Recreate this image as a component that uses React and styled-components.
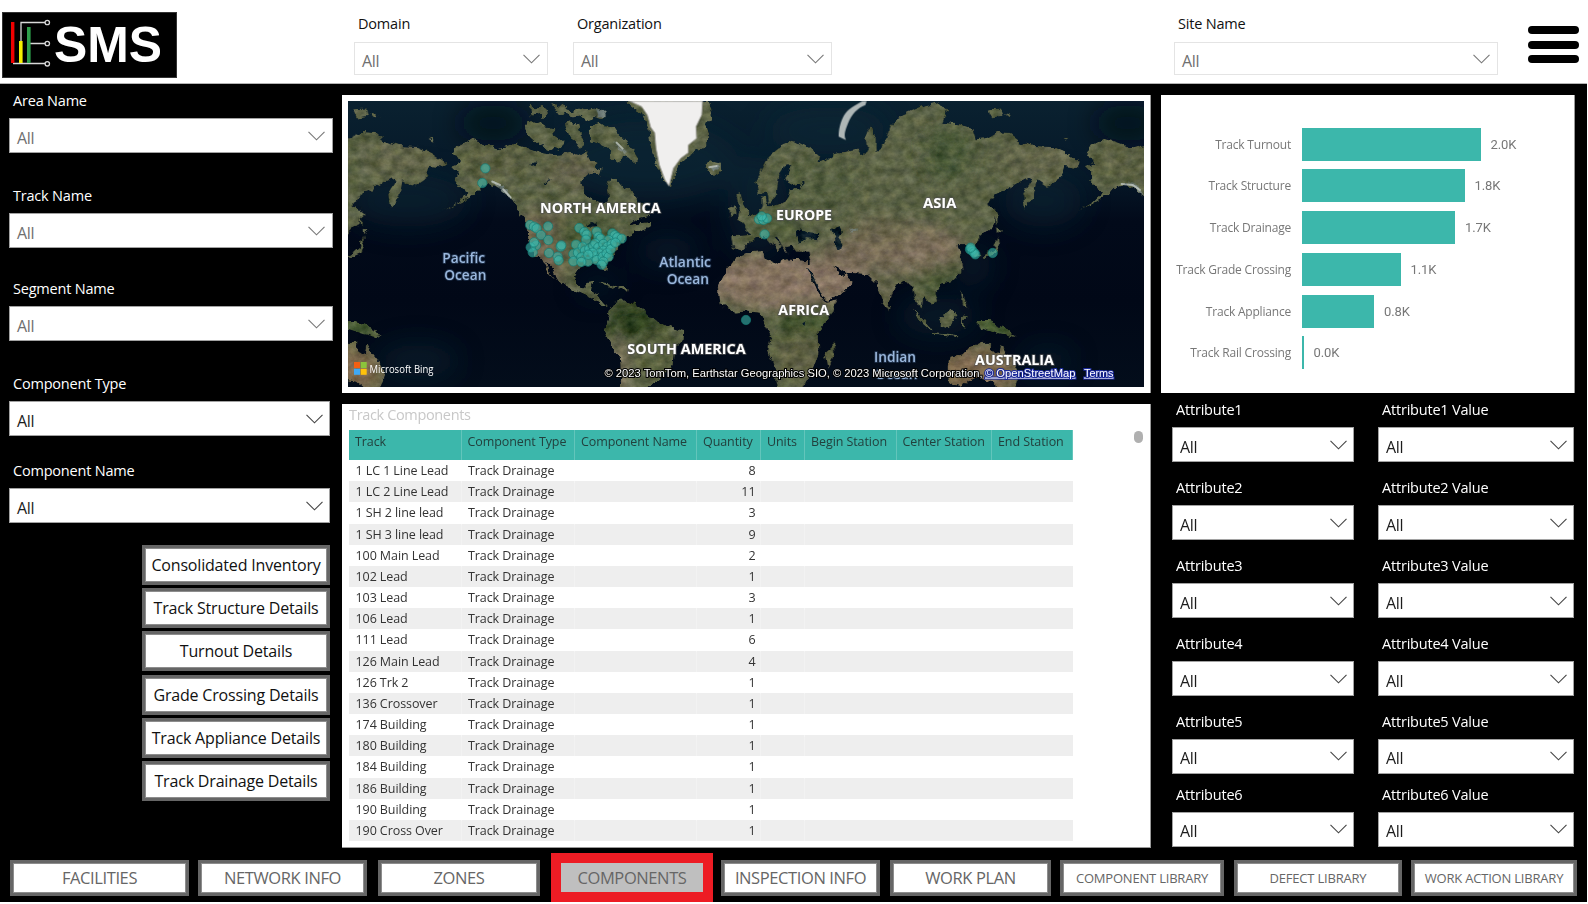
import React from "react";
import styled, { createGlobalStyle } from "styled-components";

const Global = createGlobalStyle`
  *, *::before, *::after { box-sizing: border-box; }
  body { margin: 0; background: #fff; font-family: "Open Sans", "Noto Sans", sans-serif; }
  button { font-family: inherit; }
`;

const TEAL = "#3cb7ab";

const Page = styled.div`
  width: 1588px;
  height: 904px;
  overflow: hidden;
  background: #fff;
`;

const Header = styled.header`
  height: 84px;
  width: 1587px;
  display: flex;
  align-items: flex-start;
  border-bottom: 1px solid #b4b4b4;
`;

const Logo = styled.svg`
  display: block;
  margin: 12px 177px 0 2px;
  flex: none;
`;

const MenuButton = styled.button`
  width: 51px;
  height: 37px;
  margin: 26px 0 0 30px;
  padding: 0;
  border: 0;
  background: none;
  display: flex;
  flex-direction: column;
  justify-content: space-between;
`;

const MenuBar = styled.span`
  height: 8px;
  border-radius: 4px;
  background: #000;
`;

const FieldBox = styled.div`
  width: ${(p) => p.$w}px;
  margin-top: ${(p) => p.$top || 0}px;
  margin-right: ${(p) => p.$right || 0}px;
  flex: none;
`;

const FieldLabel = styled.div`
  height: 20px;
  line-height: 20px;
  padding-left: 4px;
  margin-bottom: ${(p) => (p.$light ? 8 : 7)}px;
  font-size: 14.5px;
  letter-spacing: -0.2px;
  white-space: nowrap;
  color: ${(p) => (p.$light ? "#111" : "#fff")};
`;

const SelectBox = styled.div`
  height: ${(p) => (p.$light ? 33 : 35)}px;
  border: 1px solid ${(p) => (p.$light ? "#e4e4e4" : "#a2a2a2")};
  background: #fff;
  display: flex;
  align-items: center;
  justify-content: space-between;
  padding: 4px ${(p) => (p.$muted ? 7 : 6)}px 0 7px;
  font-size: 16px;
  letter-spacing: -0.3px;
  color: ${(p) => (p.$muted ? "#707070" : "#1c1c1c")};
  svg { margin-top: ${(p) => (p.$light ? -3 : -4)}px; }
`;

const Body = styled.div`
  display: flex;
  width: 1587px;
  height: 769px;
  background: #000;
`;

const LeftColumn = styled.aside`
  width: 342px;
  padding: 7px 0 0 9px;
  flex: none;
`;

const DetailList = styled.div`
  margin: 22px 0 0 133px;
  width: 188px;
  display: flex;
  flex-direction: column;
  gap: 3.2px;
`;

const FrameButton = styled.button`
  height: ${(p) => p.$h}px;
  width: ${(p) => (p.$w ? p.$w + "px" : "auto")};
  margin-left: ${(p) => p.$left || 0}px;
  flex: none;
  padding: ${(p) => p.$drop || 0}px 0 0;
  border: 3px solid #666;
  outline: 1px solid #8d8d8d;
  outline-offset: -4px;
  background: #fff;
  color: ${(p) => p.$color};
  font-size: ${(p) => p.$size}px;
  letter-spacing: ${(p) => p.$ls}px;
  white-space: nowrap;
  line-height: 1;
`;

const ActiveTab = styled(FrameButton)`
  border: 10px solid #ed1c24;
  outline: none;
  background: #bfbfbf;
`;

const Center = styled.main`
  width: 809px;
  padding-top: 11px;
  flex: none;
`;

const MapPanel = styled.section`
  height: 298px;
  padding: 6px;
  background: #fff;
  border-right: 1px solid #999;
  svg { display: block; }
`;

const TablePanel = styled.section`
  height: 444px;
  margin-top: 11px;
  padding-left: 7px;
  background: #fff;
  border-right: 1px solid #999;
  border-bottom: 1px solid #999;
  display: flex;
  justify-content: space-between;
`;

const TableTitle = styled.h2`
  margin: 0;
  height: 26px;
  line-height: 22px;
  font-weight: 400;
  font-size: 14.5px;
  letter-spacing: -0.35px;
  color: #c8c8c8;
`;

const TableGrid = styled.div`
  width: 724px;
  font-size: 12.5px;
`;

const Row = styled.div`
  display: grid;
  grid-template-columns: 112.5px 113.5px 122px 64px 44px 91.5px 95.5px 81px;
  height: ${(p) => (p.$head ? 30 : 21.18)}px;
  background: ${(p) => (p.$head ? TEAL : p.$odd ? "#eee" : "#fff")};
`;

const Cell = styled.div`
  padding: ${(p) => (p.$head ? "3px 0 0 6px" : "0 0 0 6.5px")};
  padding-right: ${(p) => (p.$num ? 4.5 : 0)}px;
  text-align: ${(p) => (p.$num ? "right" : "left")};
  line-height: ${(p) => (p.$head ? 18 : 22.6)}px;
  letter-spacing: -0.08px;
  white-space: nowrap;
  color: ${(p) => (p.$head ? "#22403d" : "#333")};
  border-right: 1px solid ${(p) => (p.$head ? "rgba(255,255,255,.2)" : "rgba(255,255,255,.25)")};
`;

const ScrollThumb = styled.div`
  width: 9px;
  height: 12px;
  margin: 27px 7px 0 0;
  border-radius: 5px;
  background: #b0b0b0;
`;

const RightColumn = styled.aside`
  width: 425px;
  padding: 11px 0 0 10px;
`;

const ChartPanel = styled.section`
  width: 414px;
  height: 298px;
  padding-top: 32.5px;
  background: #fff;
  border-right: 1px solid #999;
`;

const BarRow = styled.div`
  height: 41.8px;
  display: flex;
  align-items: flex-start;
  line-height: 33px;
`;

const BarLabel = styled.div`
  width: 130px;
  margin-right: 11px;
  text-align: right;
  font-size: 12px;
  letter-spacing: -0.2px;
  white-space: nowrap;
  color: #777;
`;

const Bar = styled.div`
  height: 33px;
  background: ${TEAL};
`;

const BarValue = styled.div`
  margin-left: 10px;
  font-family: Roboto, sans-serif;
  font-size: 13px;
  letter-spacing: -0.1px;
  color: #777;
`;

const Attributes = styled.div`
  display: flex;
  gap: 24px;
  margin: 7px 0 0 11px;
`;

const TabBar = styled.nav`
  width: 1587px;
  height: 49px;
  background: #000;
  display: flex;
  align-items: center;
`;

const Chevron = ({ color }) => (
  <svg width="17" height="10" viewBox="0 0 17 10" fill="none">
    <path d="M.5 .8 8.5 8.8 16.5 .8" stroke={color} strokeWidth="1.1" />
  </svg>
);

function Field({ label, w, top, right, light, muted }) {
  return (
    <FieldBox $w={w} $top={top} $right={right}>
      <FieldLabel $light={light}>{label}</FieldLabel>
      <SelectBox $light={light} $muted={muted}>
        <span>All</span>
        <Chevron color={muted ? "#777" : "#444"} />
      </SelectBox>
    </FieldBox>
  );
}

function BrandLogo() {
  return (
    <Logo width="175" height="66" viewBox="2 12 175 66">
      <rect x="2" y="12" width="175" height="66" fill="#000" />
      <rect x="2.5" y="12.5" width="174" height="65" fill="none" stroke="#333" />
      <g fill="none" stroke="#d8d8d8" strokeWidth="1.3">
        <path d="M21 42V22.5H45M30 43.5H45M13 63.5H45" />
        <circle cx="47.3" cy="22.5" r="2.2" />
        <circle cx="47.3" cy="43.5" r="2.2" />
        <circle cx="47.3" cy="63.8" r="2.2" />
      </g>
      <rect x="11" y="22" width="3.4" height="41" fill="#f00000" />
      <rect x="19" y="41" width="3.6" height="22" fill="#f5f000" />
      <rect x="27" y="27" width="3.6" height="36" fill="#2e9f4b" />
      <text x="54" y="61.5" fontFamily="'Liberation Sans', sans-serif" fontWeight="700" fontSize="50.5" fill="#fff" textLength="108" lengthAdjust="spacingAndGlyphs">SMS</text>
    </Logo>
  );
}

/* Map outlines: the Americas use sheet units directly, Eurasia and Africa sit 1215 units to the east. */
const WEST = [
  "M335 185 345 165 385 143 425 155 470 172 520 158 560 170 600 185 640 192 690 185 715 192 735 180 745 205 770 215 760 240 735 255 718 275 725 300 745 320 775 332 785 345 800 330 798 290 808 262 830 265 850 290 875 300 890 330 915 350 925 375 890 382 865 402 900 396 935 392 925 408 880 425 855 435 850 455 830 470 815 495 800 515 797 540 785 535 775 517 740 520 715 530 703 550 706 580 725 592 740 575 757 572 750 600 770 610 778 630 805 645 775 642 750 622 715 605 685 592 655 570 635 535 612 510 625 545 645 570 620 545 600 505 575 480 562 450 560 410 552 385 530 355 510 320 480 297 450 280 425 285 405 308 350 340 300 362 350 335 385 303 360 290 340 265 350 245 330 225 355 215Z",
  "M553 100 562 85 580 95 600 88 612 105 640 112 642 130 668 148 660 175 640 168 620 180 590 160 570 142 558 128Z",
  "M565 40 585 52 600 44 625 60 608 80 590 66 572 75Z",
  "M630 38 650 45 662 34 680 55 700 60 720 48 740 56 770 50 790 62 785 85 760 78 735 88 720 74 690 80 678 66 655 72Z",
  "M745 105 775 95 800 112 820 110 832 128 850 145 860 165 878 175 888 200 880 218 862 200 846 195 842 218 825 212 812 200 806 178 790 168 770 158 750 150Z",
  "M675 100 695 92 712 100 718 125 732 140 728 160 712 170 700 150 686 140Z",
  "M755 222 782 235 775 258 760 245Z",
  "M855 33 890 60 910 72 922 115 928 165 940 210 958 250 975 275 990 290 1000 250 1020 215 1050 190 1090 170 1105 130 1095 100 1115 70 1105 33Z",
  "M1088 222 1105 210 1135 216 1145 235 1120 252 1098 242Z",
  "M820 632 850 628 880 640 905 655 925 680 950 690 975 705 1030 720 1028 750 1000 775 995 820 965 850 940 870 920 895 835 895 842 850 840 800 815 775 788 720 800 690 805 660Z",
  "M765 573 800 578 832 590 820 594 790 582Z",
  "M835 588 860 588 860 596 835 596Z",
];
const EAST = [
  "M-45 435 5 432 2 410-18 388 15 375 40 362 50 345 48 318 60 318 66 343 82 345 118 332 130 298 168 292 162 278 130 284 118 262 135 222 120 224 100 255 95 285 90 320 70 338 62 305 40 310 30 270 65 200 110 165 150 150 190 170 220 195 215 215 195 218 240 208 265 190 310 180 335 175 350 195 365 170 358 130 375 105 390 130 390 180 412 165 430 110 470 70 530 45 580 33 605 60 590 95 640 100 680 110 690 145 720 140 750 122 790 125 820 150 860 165 920 168 960 185 1005 215 990 230 955 225 945 260 905 288 876 268 862 320 835 355 830 310 855 270 840 262 790 290 750 310 725 345 750 358 745 400 700 440 690 465 702 500 684 494 665 460 635 460 645 500 650 540 620 570 585 578 572 600 580 630 555 642 530 615 525 650 538 672 510 632 500 590 480 570 450 582 435 620 425 655 405 628 390 575 365 552 300 548 262 522 275 548 300 552 320 570 300 600 240 630 230 612 200 560 180 525 195 510 190 482 150 482 135 462 120 465 128 490 112 470 92 440 84 442 108 465 98 482 62 440 30 442 5 462-15 482-40 475Z",
  "M-85 590-60 540-30 500 0 485 50 480 60 505 100 520 120 505 185 510 190 545 215 600 235 632 277 625 260 665 215 720 217 790 195 850 165 895 95 895 85 830 65 780 75 735 50 690 40 665 0 662-35 665-80 640Z",
  "M235 785 268 755 268 790 245 832Z",
  "M605 830 610 800 650 790 665 770 700 755 735 755 735 780 760 790 765 755 777 780 800 810 820 850 805 895 765 895 735 870 690 860 640 884 608 880Z",
  "M690 690 730 690 790 715 812 742 760 730 700 710Z",
  "M500 655 530 680 562 720 545 712 515 685Z",
  "M560 725 635 735 630 741 560 731Z",
  "M580 682 618 652 632 670 612 710 587 702Z",
  "M638 595 652 615 668 655 652 642Z",
  "M645 675 668 680 650 692 660 712 645 705Z",
  "M755 435 760 460 752 485 715 502 705 498 742 475Z",
  "M752 408 772 418 755 430Z",
  "M748 345 756 370 755 405 748 395Z",
  "M-30 310-15 305-10 330 10 365 10 382-25 390-20 350Z",
  "M-50 350-35 345-30 370-48 380Z",
  "M725 55 765 52 770 75 735 80Z",
  "M775 65 802 72 792 80Z",
  "M425 645 434 655 428 665Z",
  "M950 140 970 140 965 150Z",
];
const WATER = [
  "M150 430 165 415 185 425 220 430 218 445 185 442 155 452Z",
  "M255 415 280 405 290 425 275 435 290 460 285 480 265 475 268 445Z",
  "M165 274 176 272 170 286Z",
  "M170 695 182 688 178 702Z",
  "M183 530 190 530 225 600 228 614Z",
];
const LAKES = ["M735 400 755 393 768 404 750 408Z", "M565 220 588 210 578 228Z", "M605 275 630 262 615 278Z"];

/* [cx, cy, rx, ry, colour] for the tinted areas of the land */
const TINTS = [
  [600, 420, 80, 60, "#6b624c"], [620, 520, 50, 70, "#70634e"], [740, 440, 100, 60, "#4e5a39"], [460, 210, 110, 60, "#5b6143"],
  [700, 240, 90, 45, "#626149"], [880, 690, 90, 50, "#2a3c1e"], [950, 790, 70, 60, "#58603e"], [835, 840, 22, 90, "#877866"],
  [1300, 570, 200, 85, "#857361"], [1470, 560, 110, 70, "#877563"], [1540, 490, 90, 50, "#736755"], [1710, 470, 160, 70, "#7c6e5a"],
  [1620, 420, 100, 40, "#6c664e"], [1390, 690, 90, 50, "#42522e"], [1380, 800, 90, 70, "#5d5f43"], [1820, 190, 70, 80, "#4a5838"],
  [2100, 210, 130, 60, "#626549"], [1430, 280, 120, 70, "#555f40"], [1800, 570, 60, 50, "#4a5736"], [1910, 840, 120, 70, "#7d684e"],
  [1955, 715, 60, 25, "#375226"], [1300, 400, 80, 40, "#505b3b"], [1640, 590, 45, 60, "#62624a"],
];

const US_DOTS = [
  [570, 405], [582, 410], [590, 415], [624, 409], [603, 435], [625, 450], [588, 466], [572, 472], [578, 487], [582, 457],
  [627, 489], [662, 470], [664, 466], [653, 500], [656, 511], [718, 414], [733, 426], [740, 434], [738, 449], [708, 464],
  [770, 425], [775, 440], [782, 446], [817, 430], [824, 436], [832, 442], [845, 446], [806, 450], [700, 492], [700, 514],
  [714, 488], [728, 470], [735, 482], [748, 476], [724, 502], [744, 515], [760, 468], [766, 460], [775, 472], [790, 462],
  [802, 470], [815, 462], [790, 482], [778, 490], [764, 500], [758, 488], [745, 494], [770, 510], [788, 500], [800, 490],
  [806, 500], [790, 515], [785, 524], [812, 478], [826, 458], [724, 516],
];
const OTHER_DOTS = [
  [436, 235], [427, 279], [1218, 690], [1257, 388], [1270, 390], [1281, 385], [1265, 379], [1274, 433],
  [1890, 478], [1896, 482], [1902, 488], [1906, 493], [1892, 473], [1958, 489],
];

const LandPaths = () => (
  <>
    {WEST.map((d) => <path key={d} d={d} />)}
    {EAST.map((d) => <path key={d} d={d} transform="translate(1215 0)" />)}
  </>
);

function WorldSheet() {
  return (
    <g id="world">
      <g fill="#5c6346"><LandPaths /></g>
      <g clipPath="url(#land)">
        <g filter="url(#soft)">
          {TINTS.map(([x, y, rx, ry, c], i) => <ellipse key={i} cx={x} cy={y} rx={rx} ry={ry} fill={c} />)}
        </g>
      </g>
      <g fill="#081a26">
        {WATER.map((d) => <path key={d} d={d} transform="translate(1215 0)" />)}
        {LAKES.map((d) => <path key={d} d={d} />)}
      </g>
    </g>
  );
}

const Place = ({ x, y, w, ocean, children }) => (
  <text x={x / 3 - 8} y={y / 3 - 11} textLength={w / 3} lengthAdjust="spacingAndGlyphs"
    fontSize="14.5" fontWeight={ocean ? 600 : 700} fill={ocean ? "#9bb8dd" : "#fff"}
    stroke={ocean ? "#2a3f5c" : "#555"} strokeWidth="2" strokeOpacity=".65" paintOrder="stroke" strokeLinejoin="round">
    {children}
  </text>
);

const Credit = ({ x, w, link, children }) => (
  <text x={x} y="275.5" textLength={w} lengthAdjust="spacingAndGlyphs" fontFamily="'Liberation Sans', sans-serif" fontSize="11"
    fill="#fff" stroke={link ? "#1c2a9c" : "#000"} strokeWidth="2" paintOrder="stroke" textDecoration={link ? "underline" : "none"}>
    {children}
  </text>
);

function WorldMap() {
  return (
    <svg width="796" height="286" viewBox="0 0 796 286" fontFamily="'Open Sans', sans-serif">
      <defs>
        <clipPath id="land"><LandPaths /></clipPath>
        <filter id="soft" x="-10%" y="-10%" width="120%" height="120%"><feGaussianBlur stdDeviation="22" /></filter>
        <filter id="blurSea" x="-30%" y="-30%" width="160%" height="160%"><feGaussianBlur stdDeviation="14" /></filter>
        <filter id="terrain" x="0" y="0" width="796" height="286" filterUnits="userSpaceOnUse" colorInterpolationFilters="sRGB">
          <feTurbulence type="fractalNoise" baseFrequency="0.13" numOctaves="3" seed="4" result="edge" />
          <feDisplacementMap in="SourceGraphic" in2="edge" scale="7" xChannelSelector="R" yChannelSelector="G" result="shape" />
          <feTurbulence type="fractalNoise" baseFrequency="0.09 0.12" numOctaves="5" seed="9" />
          <feColorMatrix values="1.1 0 0 0 0  1 .1 0 0 0  .85 0 .25 0 0  0 0 0 0 1" result="grain" />
          <feComposite in="shape" in2="grain" operator="arithmetic" k2="1" k3="0.26" k4="-0.145" />
          <feComposite in2="shape" operator="in" />
        </filter>
        <linearGradient id="sea" x1="0" y1="0" x2="0" y2="1">
          <stop offset="0" stopColor="#0a2130" />
          <stop offset=".26" stopColor="#061828" />
          <stop offset=".42" stopColor="#020a1a" />
          <stop offset=".7" stopColor="#010817" />
          <stop offset="1" stopColor="#030d1b" />
        </linearGradient>
      </defs>
      <rect width="796" height="286" fill="url(#sea)" />
      <g filter="url(#blurSea)" fill="#0b2a38" opacity=".5">
        <ellipse cx="60" cy="100" rx="60" ry="26" />
        <ellipse cx="695" cy="100" rx="40" ry="26" />
        <ellipse cx="300" cy="60" rx="90" ry="40" />
        <ellipse cx="410" cy="105" rx="30" ry="50" />
        <ellipse cx="480" cy="30" rx="60" ry="24" />
        <ellipse cx="590" cy="215" rx="40" ry="18" />
        <ellipse cx="70" cy="260" rx="40" ry="16" />
        <ellipse cx="320" cy="150" rx="30" ry="14" />
        <ellipse cx="250" cy="185" rx="20" ry="8" />
        <ellipse cx="625" cy="165" rx="18" ry="20" />
        <ellipse cx="700" cy="260" rx="24" ry="12" />
      </g>
      <g filter="url(#blurSea)" fill="#010a18" opacity=".8">
        <ellipse cx="145" cy="22" rx="34" ry="18" />
        <ellipse cx="780" cy="22" rx="34" ry="18" />
      </g>
      <g filter="url(#terrain)">
        <g transform="translate(-7 -10) scale(.33333)">
          <WorldSheet />
          <use href="#world" x="-1904" />
          <use href="#world" x="1904" />
          <g fill="#75827d">
            <path d="M768 55 790 58 796 78 775 80ZM820 150 850 178 858 195 835 175ZM455 272 490 290 515 325 540 350 510 322 470 292ZM2360 272 2395 290 2410 315 2380 292ZM1110 228 1135 228 1120 240Z" />
            <path d="M1527 412 1545 410 1540 422Z" />
          </g>
        </g>
      </g>
      <g transform="translate(-8 -11) scale(.33333)">
        <path d="M868 33 905 50 922 75 932 112 944 128 948 175 958 225 975 270 987 288 1000 235 1022 205 1045 188 1045 165 1070 145 1068 110 1085 75 1088 33Z" fill="#f0efee" stroke="#9a9a92" strokeWidth="3" strokeLinejoin="round" />
        <path d="M1580 33 1576 45C1552 54 1535 72 1524 100C1516 120 1510 135 1518 150L1496 140C1496 120 1500 98 1512 76C1524 56 1545 46 1566 34Z" fill="#aeb6b6" />
        <path d="M457 275 480 285M490 298 512 322M830 158 848 176M1108 232 1130 228M2345 282 2378 285 2400 300" fill="none" stroke="#c5ccc8" strokeWidth="6" strokeLinecap="round" opacity=".75" />
      </g>
      <Place x={387 + 1215} y={817} w={126} ocean>Indian</Place>
      <Place x={390 + 1215} y={868} w={128} ocean>Ocean</Place>
      <g transform="translate(-8 -11) scale(.33333)" fill={TEAL} fillOpacity=".6" stroke="#137a72" strokeOpacity=".8" strokeWidth="2.5">
        {US_DOTS.concat(OTHER_DOTS).map(([x, y], i) => <circle key={i} cx={x} cy={y} r="14" />)}
      </g>
      <Place x={307} y={518} w={128} ocean>Pacific</Place>
      <Place x={313} y={570} w={126} ocean>Ocean</Place>
      <Place x={958} y={530} w={155} ocean>Atlantic</Place>
      <Place x={980} y={582} w={127} ocean>Ocean</Place>
      <Place x={600} y={369} w={362}>NORTH AMERICA</Place>
      <Place x={862} y={793} w={355}>SOUTH AMERICA</Place>
      <Place x={93 + 1215} y={391} w={168}>EUROPE</Place>
      <Place x={534 + 1215} y={354} w={100}>ASIA</Place>
      <Place x={100 + 1215} y={674} w={152}>AFRICA</Place>
      <Place x={690 + 1215} y={826} w={237}>AUSTRALIA</Place>
      <rect x="6" y="261" width="6" height="6" fill="#f25f13" />
      <rect x="12.7" y="261" width="6" height="6" fill="#8bc43c" />
      <rect x="6" y="267.8" width="6" height="6" fill="#3fa9f5" />
      <rect x="12.7" y="267.8" width="6" height="6" fill="#ffc20a" />
      <text x="21.5" y="271.5" fontSize="10.5" fill="#fff" textLength="64" lengthAdjust="spacingAndGlyphs">Microsoft Bing</text>
      <Credit x={256.5} w={378}>© 2023 TomTom, Earthstar Geographics SIO, © 2023 Microsoft Corporation,</Credit>
      <Credit x={637} w={90.5} link>© OpenStreetMap</Credit>
      <Credit x={736} w={29.5} link>Terms</Credit>
    </svg>
  );
}

const BARS = [
  ["Track Turnout", 178.5, "2.0K"],
  ["Track Structure", 162.5, "1.8K"],
  ["Track Drainage", 153, "1.7K"],
  ["Track Grade Crossing", 98.5, "1.1K"],
  ["Track Appliance", 72, "0.8K"],
  ["Track Rail Crossing", 1.5, "0.0K"],
];

const COLUMNS = ["Track", "Component Type", "Component Name", "Quantity", "Units", "Begin Station", "Center Station", "End Station"];

const TRACKS = [
  ["1 LC 1 Line Lead", 8], ["1 LC 2 Line Lead", 11], ["1 SH 2 line lead", 3], ["1 SH 3 line lead", 9],
  ["100 Main Lead", 2], ["102 Lead", 1], ["103 Lead", 3], ["106 Lead", 1], ["111 Lead", 6], ["126 Main Lead", 4],
  ["126 Trk 2", 1], ["136 Crossover", 1], ["174 Building", 1], ["180 Building", 1], ["184 Building", 1],
  ["186 Building", 1], ["190 Building", 1], ["190 Cross Over", 1],
];

const DETAILS = [
  "Consolidated Inventory", "Track Structure Details", "Turnout Details",
  "Grade Crossing Details", "Track Appliance Details", "Track Drainage Details",
];

const TABS = [
  { name: "FACILITIES", left: 10, w: 179 },
  { name: "NETWORK INFO", left: 9, w: 169 },
  { name: "ZONES", left: 11, w: 162 },
  { name: "COMPONENTS", left: 11, w: 162, active: true },
  { name: "INSPECTION INFO", left: 8, w: 159 },
  { name: "WORK PLAN", left: 10, w: 161 },
  { name: "COMPONENT LIBRARY", left: 9, w: 164, small: true },
  { name: "DEFECT LIBRARY", left: 10, w: 168, small: true },
  { name: "WORK ACTION LIBRARY", left: 9, w: 166, small: true },
];

const ATTR_TOPS = [0, 16, 16, 16, 15.5, 11];

export default function App() {
  return (
    <>
      <Global />
      <Page>
        <Header>
          <BrandLogo />
          <Field label="Domain" w={194} top={14} right={25} light muted />
          <Field label="Organization" w={259} top={14} right={342} light muted />
          <Field label="Site Name" w={324} top={14} light muted />
          <MenuButton aria-label="Menu"><MenuBar /><MenuBar /><MenuBar /></MenuButton>
        </Header>
        <Body>
          <LeftColumn>
            <Field label="Area Name" w={324} muted />
            <Field label="Track Name" w={324} top={33} muted />
            <Field label="Segment Name" w={324} top={31} muted />
            <Field label="Component Type" w={321} top={33} />
            <Field label="Component Name" w={321} top={25} />
            <DetailList>
              {DETAILS.map((d) => (
                <FrameButton key={d} $h={40} $size={16} $ls={-0.18} $color="#111">{d}</FrameButton>
              ))}
            </DetailList>
          </LeftColumn>
          <Center>
            <MapPanel><WorldMap /></MapPanel>
            <TablePanel>
              <TableGrid>
                <TableTitle>Track Components</TableTitle>
                <Row $head>
                  {COLUMNS.map((c) => <Cell key={c} $head>{c}</Cell>)}
                </Row>
                {TRACKS.map(([track, qty], i) => (
                  <Row key={track} $odd={i % 2 === 1}>
                    <Cell>{track}</Cell>
                    <Cell>Track Drainage</Cell>
                    <Cell />
                    <Cell $num>{qty}</Cell>
                    <Cell />
                  </Row>
                ))}
              </TableGrid>
              <ScrollThumb />
            </TablePanel>
          </Center>
          <RightColumn>
            <ChartPanel>
              {BARS.map(([label, w, value]) => (
                <BarRow key={label}>
                  <BarLabel>{label}</BarLabel>
                  <Bar style={{ width: w }} />
                  <BarValue>{value}</BarValue>
                </BarRow>
              ))}
            </ChartPanel>
            <Attributes>
              <div>
                {ATTR_TOPS.map((t, i) => <Field key={i} label={`Attribute${i + 1}`} w={182} top={t} />)}
              </div>
              <div>
                {ATTR_TOPS.map((t, i) => <Field key={i} label={`Attribute${i + 1} Value`} w={196} top={t} />)}
              </div>
            </Attributes>
          </RightColumn>
        </Body>
        <TabBar>
          {TABS.map((t) => {
            const Tab = t.active ? ActiveTab : FrameButton;
            return (
              <Tab key={t.name} $h={t.active ? 49 : 36} $w={t.w} $left={t.left} $color="#666" $drop={2}
                $size={t.small ? 13 : 16.5} $ls={t.small ? -0.2 : -0.4}>
                {t.name}
              </Tab>
            );
          })}
        </TabBar>
      </Page>
    </>
  );
}
